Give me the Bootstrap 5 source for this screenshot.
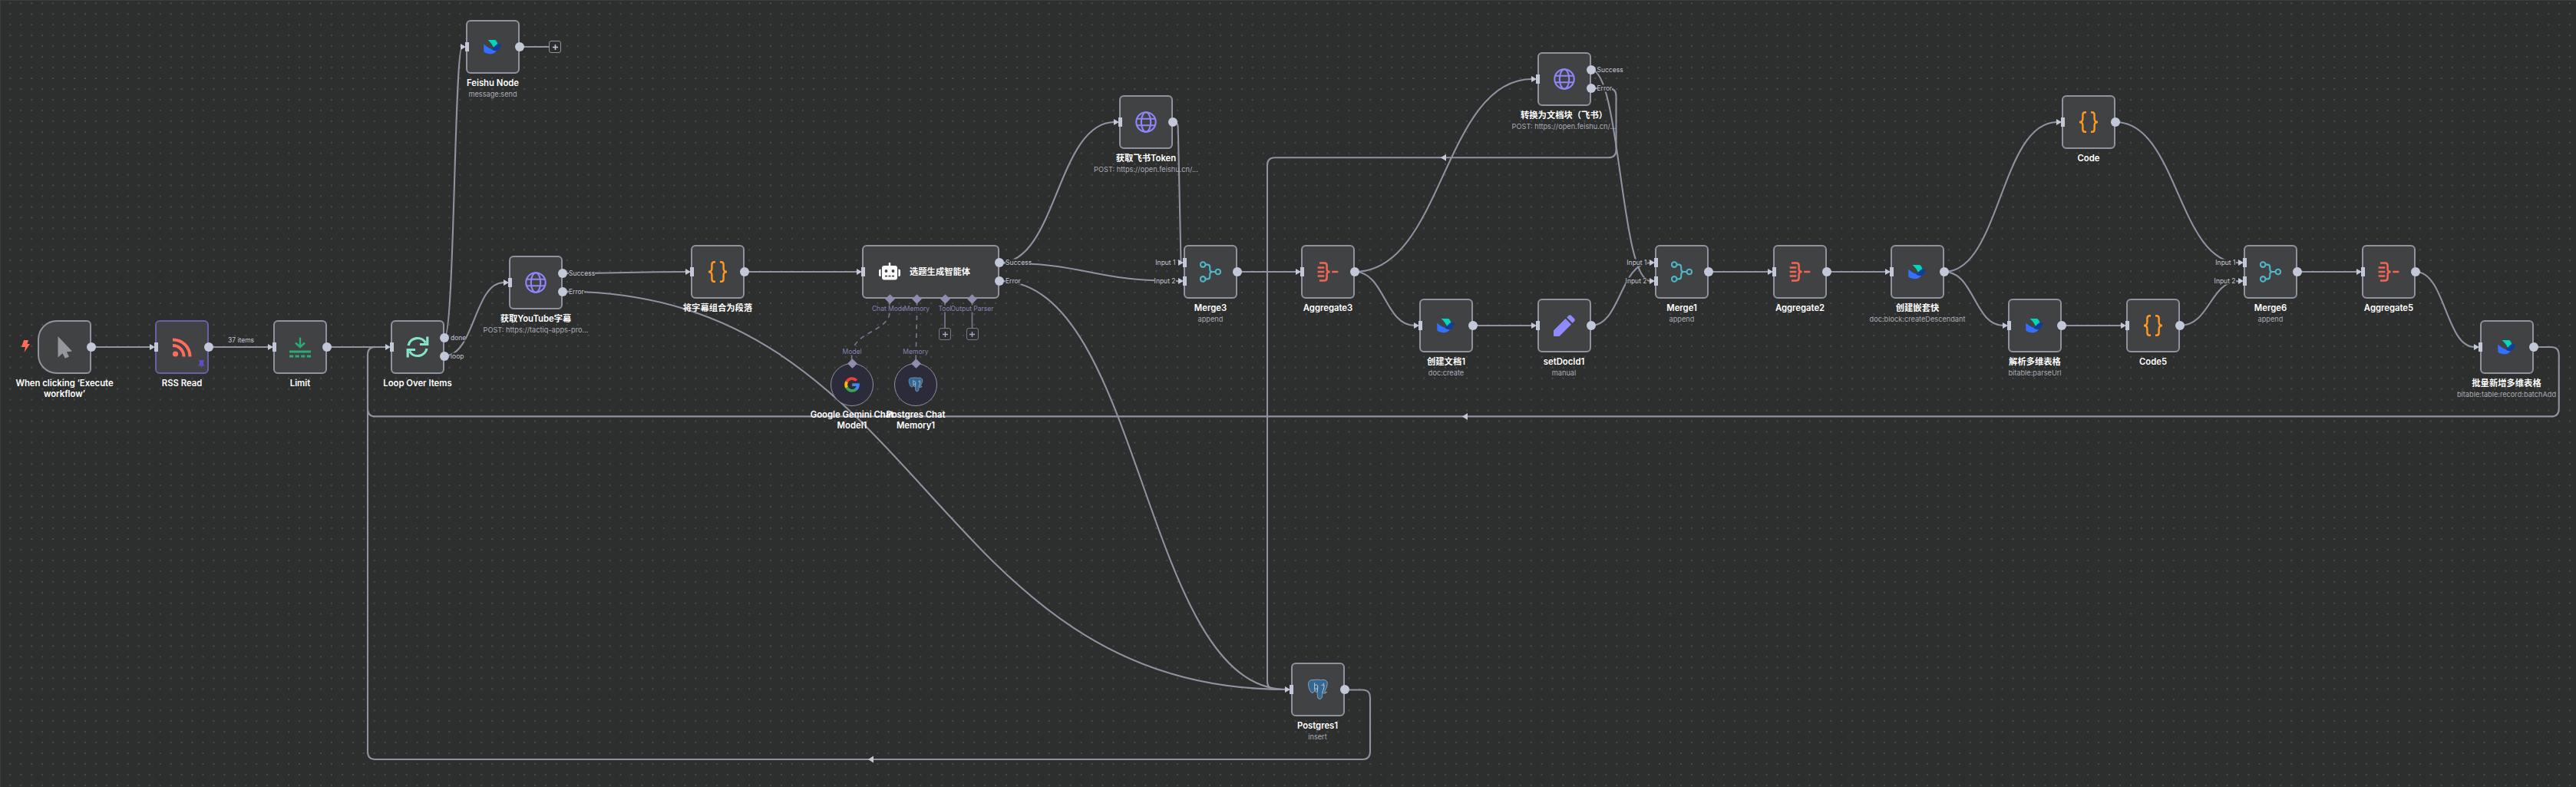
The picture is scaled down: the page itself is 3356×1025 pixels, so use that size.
<!DOCTYPE html>
<html lang="zh-CN">
<head>
<meta charset="utf-8">
<meta name="viewport" content="width=device-width, initial-scale=1">
<title>Workflow</title>
<link href="https://cdn.jsdelivr.net/npm/bootstrap@5.3.0/dist/css/bootstrap.min.css" rel="stylesheet">
<style>
:root{--ink:#2d2e2e;--tile:#414244;--edge:#9092a0;--port:#c3c8d8;--aux:#8d8dac;}
body{background:var(--ink);font-family:Inter,"Noto Sans CJK SC",sans-serif;color:#fff;}
.flow{width:3356px;height:1025px;background:var(--ink);}
.wires{left:0;top:0;z-index:0;}
.wires .w{fill:none;stroke:var(--edge);stroke-width:2.1;}
.flow-node{position:absolute;width:70px;height:70px;z-index:1;}
.tile{width:70px;height:70px;background:var(--tile);border:2px solid var(--edge);border-radius:6px;}
.tile svg{width:28px;height:28px;overflow:visible;}
.trigger .tile{border-radius:25px 6px 6px 25px;}
.pinned .tile{border-color:#6a60a8;}
.wide,.wide .tile{width:179px;}
.wide .tile{padding-left:20px;}
.round,.round .tile{width:56px;height:56px;}
.round .tile{border-radius:50%;background:#2b2b3a;border-width:1.5px;}
.round .tile svg{width:20px;height:20px;}
.out,.inp,.dia{position:absolute;top:35px;}
.out{width:12px;height:12px;border-radius:50%;background:var(--port);right:-6px;margin-top:-6px;}
.inp{width:5px;height:12px;background:var(--port);left:-1.5px;margin-top:-6px;}
.inp::before{content:"";position:absolute;left:-6px;top:1.5px;border-left:7px solid var(--port);border-top:4.5px solid transparent;border-bottom:4.5px solid transparent;}
.up{top:23.3px;}
.down{top:47px;}
.dia{width:9px;height:9px;background:var(--aux);transform:rotate(45deg);margin:-4.5px 0 0 -4.5px;}
.tag{position:absolute;font-size:8.5px;line-height:9px;white-space:nowrap;background:var(--ink);color:#c3c6d4;transform:translateY(-50%);}
.tag-out{left:78px;}
.wide .tag-out{left:187px;}
.tag-in{right:80.5px;}
.tag-aux{color:#8585b0;transform:translate(-50%,-50%);}
.up.tag{top:23px;}.down.tag{top:47px;}
.caption-box{position:absolute;left:50%;top:74.5px;width:150px;transform:translateX(-50%);}
.round .caption-box{top:60px;width:110px;}
.ttl{font-size:11.3px;line-height:14.2px;font-weight:600;color:#fff;}
.sub{font-size:9.2px;line-height:14px;color:#abadb8;white-space:nowrap;margin-top:1px;}
.plus-box{position:absolute;width:16px;height:16px;border:1.6px solid var(--edge);border-radius:3px;z-index:1;color:var(--port);background:var(--ink);}
.plus-box svg{width:7px;height:7px;}
.plus-aux{border-color:#77778c;color:#a7a7c4;}
#manual{left:49px;top:417px}#rss{left:202px;top:417px}#limit{left:356px;top:417px}#loop{left:509px;top:417px}
#feishu{left:607px;top:26px}#yt{left:663px;top:333px}#join{left:900px;top:319px}#agent{left:1123px;top:319px}
#gemini{left:1082px;top:473px}#pgmem{left:1165px;top:473px}
#token{left:1458px;top:124px}#merge3{left:1542px;top:319px}#agg3{left:1695px;top:319px}
#convert{left:2002.5px;top:68px}#doc1{left:1849px;top:389px}#setdoc{left:2002.5px;top:389px}
#merge1{left:2156px;top:319px}#agg2{left:2310px;top:319px}#embed{left:2463px;top:319px}
#code{left:2686px;top:124px}#parse{left:2616px;top:389px}#code5{left:2770px;top:389px}
#merge6{left:2923px;top:319px}#agg5{left:3077px;top:319px}#batch{left:3230.5px;top:417px}#pg1{left:1681.5px;top:863px}
#bolt{position:absolute;left:-21px;top:26px;width:11px;height:16px}
#pin{position:absolute;left:56px;top:52px;width:9px;height:11px}
#items{left:297px;top:443px;background:none}
#a1,#t1{left:36px}#a2,#t2{left:71.5px}#a3,#t3{left:108px}#a4,#t4{left:143.5px}
.wide .dia{top:70px}.wide .tag-aux{top:83px}
.round .dia{top:0;left:50%}.round .tag-aux{top:-15px;left:50%}
#p1{left:715px;top:53px}#p2{left:1223px;top:427px}#p3{left:1258.5px;top:427px}
</style>
</head>
<body class="m-0 overflow-hidden">
<svg class="d-none" xmlns="http://www.w3.org/2000/svg">
  <symbol id="i-feishu" viewBox="0 0 28 28">
    <path d="M7.6 5H17.2C19 6.7 20.2 8.8 20.8 11.2L15.2 15C13.2 11 10.8 7.8 7.6 5Z" fill="#00d6b9"/>
    <path d="M2.2 10.5C7 15 13 18.2 20 18C17.5 21.6 14.4 23.2 11 23.2C7.6 23.2 4.8 22.2 2.4 20.4Z" fill="#3370ff"/>
    <path d="M12.5 17.2C16 14.8 17.2 10.6 21 10.2C23 10 24.4 10.4 25.6 10.9C23.4 13.5 22.8 18.8 18 19.2C16 19.2 14 18.4 12.5 17.2Z" fill="#133c9a"/>
  </symbol>
  <symbol id="i-globe" viewBox="0 0 28 28"><g fill="none" stroke="#8f87f7" stroke-width="2.1"><circle cx="14" cy="14" r="12.7"/><ellipse cx="14" cy="14" rx="6.2" ry="12.7"/><path d="M2 9.8H26M2 18.2H26"/></g></symbol>
  <symbol id="i-code" viewBox="0 0 28 28"><path d="M11 1.3H9.6Q6.4 1.3 6.4 4.6V9.6Q6.4 14 2 14Q6.4 14 6.4 18.4V23.4Q6.4 26.7 9.6 26.7H11M17 1.3H18.4Q21.600 1.3 21.6 4.6V9.6Q21.6 14 26 14Q21.6 14 21.6 18.4V23.4Q21.6 26.7 18.4 26.7H17" fill="none" stroke="#ff9922" stroke-width="2.4"/></symbol>
  <symbol id="i-merge" viewBox="0 0 28 28"><g fill="none" stroke="#4fb6c6" stroke-width="2.1"><circle cx="4.2" cy="4.6" r="3.3"/><circle cx="4.2" cy="23.4" r="3.3"/><circle cx="23.8" cy="14" r="3.3"/><path d="M7.5 4.6H10Q13.2 4.6 13.2 7.8V10.4Q13.2 14 16.6 14H20.5M7.5 23.4H10Q13.2 23.4 13.2 20.2V17.6Q13.2 14 16.6 14"/></g></symbol>
  <symbol id="i-agg" viewBox="0 0 28 28"><path d="M3 2.600H9.500Q12.600 2.600 12.600 6V10.600Q12.600 14 16.600 14Q12.600 14 12.600 17.400V22Q12.600 25.400 9.500 25.400H3M.7 8.500H9.300M.7 14H9.300M.7 19.500H9.300M19.300 14H27.300" fill="none" stroke="#f36653" stroke-width="2.500"/></symbol>
  <symbol id="i-pg" viewBox="0 0 28 28">
    <path d="M8 1.6C3.4 1 1 4 1.6 8.2C2.2 12.4 4 17.2 6 18.2C7.4 18.8 8.6 17 9.6 16.2C10.4 17.6 12 17.6 13 17.4C13.6 20 12.6 26 16 26.4C19.6 26.6 19.6 22.4 19.8 18.6C21.6 19.4 24.4 19 25.6 17.4C24.4 17.2 22.8 17.2 22.4 16.6C25 13 27.2 6.6 25.8 4C24.2 1.2 20.4 1 17.6 1.8C14.4 .8 11 1.2 8 1.6Z" fill="#336791" stroke="#8fa6b9" stroke-width="1"/>
    <path d="M10.2 16C9 12 10 8.6 9.6 5.4M13.4 17.2C13 14 14.2 11.6 13.6 8.8C12.6 7.4 10.4 8 9.8 8.6M19.8 18.2C20 15 23.6 11.6 21 5.6M18.4 8.6C19.4 7.6 21.4 8 21.8 9.4M10.4 12.8C11.6 13.6 13 13.4 13.6 12" fill="none" stroke="#c3d0dc" stroke-width="1"/>
  </symbol>
</svg>

<main class="flow position-relative overflow-hidden">
  <svg class="wires position-absolute" width="3356" height="1025" xmlns="http://www.w3.org/2000/svg">
    <defs><pattern id="grid" width="13.953" height="13.953" patternUnits="userSpaceOnUse" x="6.35" y="-2.65"><circle cx="6.98" cy="6.98" r="1" fill="#505255"/></pattern></defs>
    <rect width="3356" height="1025" fill="url(#grid)"/>
    <path d="M.5 0V1025M0 .5H3356" stroke="#3b3d3d"/>
    <g class="w">
      <path d="M119 452H195M272 452H349M426 452H502M970 354H1117M1612 354H1688M1919 424H1996M2226 354H2303M2380 354H2456M2686 424H2763M2993 354H3070"/>
      <path d="M579 440C592 440 592 61 602 61M677 61H715"/>
      <path d="M579 463.5C618 463.5 618 368 656 368"/>
      <path d="M733 356C815 356 815 354 893 354"/>
      <path d="M733 379.6C1207 379.6 1207 898 1676 898"/>
      <path d="M1302 342.5C1377 342.5 1377 159 1452 159"/>
      <path d="M1302 342.5C1419 342.5 1419 366 1536 366"/>
      <path d="M1302 366C1489 366 1489 898 1676 898"/>
      <path d="M1528 159C1537 159 1534 165 1535 178L1538.500 340"/>
      <path d="M1765 354C1880 354 1880 103 1996 103"/>
      <path d="M1765 354C1804 354 1804 424 1843 424"/>
      <path d="M2073 91C2111 91 2111 366 2150 366"/>
      <path d="M2073 424C2111 424 2111 342.3 2150 342.3"/>
      <path d="M2533 354C2606 354 2606 159 2680 159"/>
      <path d="M2533 354C2572 354 2572 424 2610 424"/>
      <path d="M2756 159C2837 159 2837 342.3 2917 342.3"/>
      <path d="M2840 424C2879 424 2879 366 2917 366"/>
      <path d="M3147 354C3186 354 3186 452 3224 452"/>
      <path d="M2073 115H2095Q2105.5 115 2105.5 125V195.3Q2105.5 205.3 2095.5 205.3H1661Q1651 205.3 1651 215.3V887Q1651 898 1661 898H1676"/>
      <path d="M3300 452H3323.7Q3333.7 452 3333.7 462V532.4Q3333.7 542.4 3323.7 542.4H489Q479 542.4 479 532.4V462Q479 452 489 452H503"/>
      <path d="M1752 898.5H1775Q1785 898.5 1785 908.5V979Q1785 989 1775 989H489Q479 989 479 979V462"/>
    </g>
    <path d="M1905 542.4l7 -4.500v9zM1877 205.3l7 -4.500v9zM1131 989l7 -4.500v9z" fill="#c3c8d8"/>
    <g fill="none" stroke="#77778c" stroke-width="1.7">
      <path d="M1159 391V407M1194.5 391V407M1109.6 462V473M1193.2 462V473M1231 391V427M1266.5 391V427"/>
      <path d="M1159 408C1156 432 1112 432 1110 461M1194.5 411L1193.3 461" stroke-dasharray="6 5.5"/>
    </g>
  </svg>

  <div class="flow-node trigger" id="manual"><div class="tile d-flex align-items-center justify-content-center"><svg viewBox="0 0 28 28"><path d="M5.5 0V27.5L11.5 22.2L14.8 28.8L20 26.5L16.8 20.2L24 19.5Z" fill="#96979c"/></svg></div><svg id="bolt" viewBox="0 0 11 16"><path d="M3 0H9L7.5 5H11L3.5 16L5 9H0Z" fill="#ff6d5a"/></svg><span class="out"></span><div class="caption-box text-center"><div class="ttl">When clicking ‘Execute workflow’</div></div></div>

  <div class="flow-node pinned" id="rss"><div class="tile d-flex align-items-center justify-content-center"><svg viewBox="0 0 28 28"><g fill="none" stroke="#ff6d5a" stroke-width="4"><path d="M2 4.5C15 4.5 24.5 14 24.5 26.500M2 12C10 12 16.5 18 16.5 26.5"/></g><circle cx="5.5" cy="23" r="3.6" fill="#ff6d5a"/></svg></div><svg id="pin" viewBox="0 0 9 11"><path d="M1 0H8V1.5H7V5L9 7.5H5.2L4.5 11L3.8 7.5H0L2 5V1.5H1Z" fill="#5b4fc4"/></svg><span class="inp"></span><span class="out"></span><div class="caption-box text-center"><div class="ttl">RSS Read</div></div></div>
  <span class="tag" id="items">37 items</span>

  <div class="flow-node" id="limit"><div class="tile d-flex align-items-center justify-content-center"><svg viewBox="0 0 28 28"><g fill="none" stroke="#2cab75" stroke-width="2.4"><path d="M14 1.5V13M8 8.500L14 14L20 8.5"/><path d="M0 20H28" stroke-width="3"/><path d="M0 26H28" stroke-width="3" stroke-dasharray="5.2 2.4"/></g></svg></div><span class="inp"></span><span class="out"></span><div class="caption-box text-center"><div class="ttl">Limit</div></div></div>

  <div class="flow-node" id="loop"><div class="tile d-flex align-items-center justify-content-center"><svg viewBox="0 0 28 28"><g fill="none" stroke="#86e4cb" stroke-width="3.2"><path d="M2 12A12.3 12.3 0 0 1 24.5 8.5M26 16A12.3 12.3 0 0 1 3.5 19.5"/><path d="M26.8 .5V10.5H17M1.2 27.5V17.5H11"/></g></svg></div><span class="inp"></span><span class="out up"></span><span class="out down"></span><span class="tag tag-out up">done</span><span class="tag tag-out down">loop</span><div class="caption-box text-center"><div class="ttl">Loop Over Items</div></div></div>

  <div class="flow-node" id="feishu"><div class="tile d-flex align-items-center justify-content-center"><svg><use href="#i-feishu"/></svg></div><span class="inp"></span><span class="out"></span><div class="caption-box text-center"><div class="ttl">Feishu Node</div><div class="sub">message:send</div></div></div>
  <div class="plus-box d-flex align-items-center justify-content-center" id="p1"><svg viewBox="0 0 7 7"><path d="M3.5 0V7M0 3.5H7" stroke="currentColor" stroke-width="1.6"/></svg></div>

  <div class="flow-node" id="yt"><div class="tile d-flex align-items-center justify-content-center"><svg><use href="#i-globe"/></svg></div><span class="inp"></span><span class="out up"></span><span class="out down"></span><span class="tag tag-out up">Success</span><span class="tag tag-out down">Error</span><div class="caption-box text-center"><div class="ttl">获取YouTube字幕</div><div class="sub">POST: https://tactiq-apps-pro...</div></div></div>

  <div class="flow-node" id="join"><div class="tile d-flex align-items-center justify-content-center"><svg><use href="#i-code"/></svg></div><span class="inp"></span><span class="out"></span><div class="caption-box text-center"><div class="ttl">将字幕组合为段落</div></div></div>

  <div class="flow-node wide" id="agent"><div class="tile d-flex align-items-center gap-2"><svg viewBox="0 0 28 28"><path d="M12.8 2H15.2V6H21Q24 6 24 9V21.5Q24 24.5 21 24.5H7Q4 24.5 4 21.5V9Q4 6 7 6H12.8ZM0 12Q0 10.5 2.6 10.5V20Q0 20 0 18.5ZM28 12Q28 10.5 25.4 10.5V20Q28 20 28 18.5Z" fill="#fff"/><circle cx="9.5" cy="13" r="1.9" fill="#414244"/><circle cx="18.5" cy="13" r="1.9" fill="#414244"/><path d="M8 19.6H20" stroke="#414244" stroke-width="1.7" stroke-dasharray="3 1.5"/></svg><span class="ttl ms-1">选题生成智能体</span></div><span class="inp"></span><span class="out up"></span><span class="out down"></span><span class="tag tag-out up">Success</span><span class="tag tag-out down">Error</span>
    <span class="dia" id="a1"></span><span class="dia" id="a2"></span><span class="dia" id="a3"></span><span class="dia" id="a4"></span>
    <span class="tag tag-aux" id="t1">Chat Model</span><span class="tag tag-aux" id="t2">Memory</span><span class="tag tag-aux" id="t3">Tool</span><span class="tag tag-aux" id="t4">Output Parser</span></div>
  <div class="plus-box plus-aux d-flex align-items-center justify-content-center" id="p2"><svg viewBox="0 0 7 7"><path d="M3.5 0V7M0 3.5H7" stroke="currentColor" stroke-width="1.4"/></svg></div>
  <div class="plus-box plus-aux d-flex align-items-center justify-content-center" id="p3"><svg viewBox="0 0 7 7"><path d="M3.5 0V7M0 3.5H7" stroke="currentColor" stroke-width="1.4"/></svg></div>

  <div class="flow-node round" id="gemini"><div class="tile d-flex align-items-center justify-content-center"><svg viewBox="0 0 20 20"><g fill="none" stroke-width="3.8"><path d="M3.2 6.2A7.9 7.9 0 0 1 15.8 4.5" stroke="#ea4335"/><path d="M3.2 13.9A7.9 7.9 0 0 1 3.2 6.1" stroke="#fbbc05"/><path d="M15.4 15.8A7.9 7.9 0 0 1 3.1 13.7" stroke="#34a853"/><path d="M10.2 10.2H17.9A7.9 7.9 0 0 1 15.2 16" stroke="#4285f4"/></g></svg></div><span class="dia"></span><span class="tag tag-aux">Model</span><div class="caption-box text-center"><div class="ttl">Google Gemini Chat Model1</div></div></div>

  <div class="flow-node round" id="pgmem"><div class="tile d-flex align-items-center justify-content-center"><svg><use href="#i-pg"/></svg></div><span class="dia"></span><span class="tag tag-aux">Memory</span><div class="caption-box text-center"><div class="ttl">Postgres Chat Memory1</div></div></div>

  <div class="flow-node" id="token"><div class="tile d-flex align-items-center justify-content-center"><svg><use href="#i-globe"/></svg></div><span class="inp"></span><span class="out"></span><div class="caption-box text-center"><div class="ttl">获取飞书Token</div><div class="sub">POST: https://open.feishu.cn/...</div></div></div>

  <div class="flow-node" id="merge3"><div class="tile d-flex align-items-center justify-content-center"><svg><use href="#i-merge"/></svg></div><span class="inp up"></span><span class="inp down"></span><span class="tag tag-in up">Input 1</span><span class="tag tag-in down">Input 2</span><span class="out"></span><div class="caption-box text-center"><div class="ttl">Merge3</div><div class="sub">append</div></div></div>

  <div class="flow-node" id="agg3"><div class="tile d-flex align-items-center justify-content-center"><svg><use href="#i-agg"/></svg></div><span class="inp"></span><span class="out"></span><div class="caption-box text-center"><div class="ttl">Aggregate3</div></div></div>

  <div class="flow-node" id="convert"><div class="tile d-flex align-items-center justify-content-center"><svg><use href="#i-globe"/></svg></div><span class="inp"></span><span class="out up"></span><span class="out down"></span><span class="tag tag-out up">Success</span><span class="tag tag-out down">Error</span><div class="caption-box text-center"><div class="ttl">转换为文档块（飞书）</div><div class="sub">POST: https://open.feishu.cn/...</div></div></div>

  <div class="flow-node" id="doc1"><div class="tile d-flex align-items-center justify-content-center"><svg><use href="#i-feishu"/></svg></div><span class="inp"></span><span class="out"></span><div class="caption-box text-center"><div class="ttl">创建文档1</div><div class="sub">doc:create</div></div></div>

  <div class="flow-node" id="setdoc"><div class="tile d-flex align-items-center justify-content-center"><svg viewBox="0 0 28 28"><path d="M0 20.5L15.5 5L23 12.5L7.5 28H1Q0 28 0 27ZM17.2 3.4L19.5 1Q21.3 -.5 23 1L27 5Q28.5 6.7 27 8.5L24.6 10.8Z" fill="#8f8bff"/></svg></div><span class="inp"></span><span class="out"></span><div class="caption-box text-center"><div class="ttl">setDocId1</div><div class="sub">manual</div></div></div>

  <div class="flow-node" id="merge1"><div class="tile d-flex align-items-center justify-content-center"><svg><use href="#i-merge"/></svg></div><span class="inp up"></span><span class="inp down"></span><span class="tag tag-in up">Input 1</span><span class="tag tag-in down">Input 2</span><span class="out"></span><div class="caption-box text-center"><div class="ttl">Merge1</div><div class="sub">append</div></div></div>

  <div class="flow-node" id="agg2"><div class="tile d-flex align-items-center justify-content-center"><svg><use href="#i-agg"/></svg></div><span class="inp"></span><span class="out"></span><div class="caption-box text-center"><div class="ttl">Aggregate2</div></div></div>

  <div class="flow-node" id="embed"><div class="tile d-flex align-items-center justify-content-center"><svg><use href="#i-feishu"/></svg></div><span class="inp"></span><span class="out"></span><div class="caption-box text-center"><div class="ttl">创建嵌套快</div><div class="sub">doc:block:createDescendant</div></div></div>

  <div class="flow-node" id="code"><div class="tile d-flex align-items-center justify-content-center"><svg><use href="#i-code"/></svg></div><span class="inp"></span><span class="out"></span><div class="caption-box text-center"><div class="ttl">Code</div></div></div>

  <div class="flow-node" id="parse"><div class="tile d-flex align-items-center justify-content-center"><svg><use href="#i-feishu"/></svg></div><span class="inp"></span><span class="out"></span><div class="caption-box text-center"><div class="ttl">解析多维表格</div><div class="sub">bitable:parseUrl</div></div></div>

  <div class="flow-node" id="code5"><div class="tile d-flex align-items-center justify-content-center"><svg><use href="#i-code"/></svg></div><span class="inp"></span><span class="out"></span><div class="caption-box text-center"><div class="ttl">Code5</div></div></div>

  <div class="flow-node" id="merge6"><div class="tile d-flex align-items-center justify-content-center"><svg><use href="#i-merge"/></svg></div><span class="inp up"></span><span class="inp down"></span><span class="tag tag-in up">Input 1</span><span class="tag tag-in down">Input 2</span><span class="out"></span><div class="caption-box text-center"><div class="ttl">Merge6</div><div class="sub">append</div></div></div>

  <div class="flow-node" id="agg5"><div class="tile d-flex align-items-center justify-content-center"><svg><use href="#i-agg"/></svg></div><span class="inp"></span><span class="out"></span><div class="caption-box text-center"><div class="ttl">Aggregate5</div></div></div>

  <div class="flow-node" id="batch"><div class="tile d-flex align-items-center justify-content-center"><svg><use href="#i-feishu"/></svg></div><span class="inp"></span><span class="out"></span><div class="caption-box text-center"><div class="ttl">批量新增多维表格</div><div class="sub">bitable:table:record:batchAdd</div></div></div>

  <div class="flow-node" id="pg1"><div class="tile d-flex align-items-center justify-content-center"><svg><use href="#i-pg"/></svg></div><span class="inp"></span><span class="out"></span><div class="caption-box text-center"><div class="ttl">Postgres1</div><div class="sub">insert</div></div></div>
</main>
<script src="https://cdn.jsdelivr.net/npm/bootstrap@5.3.0/dist/js/bootstrap.bundle.min.js"></script>
</body>
</html>
